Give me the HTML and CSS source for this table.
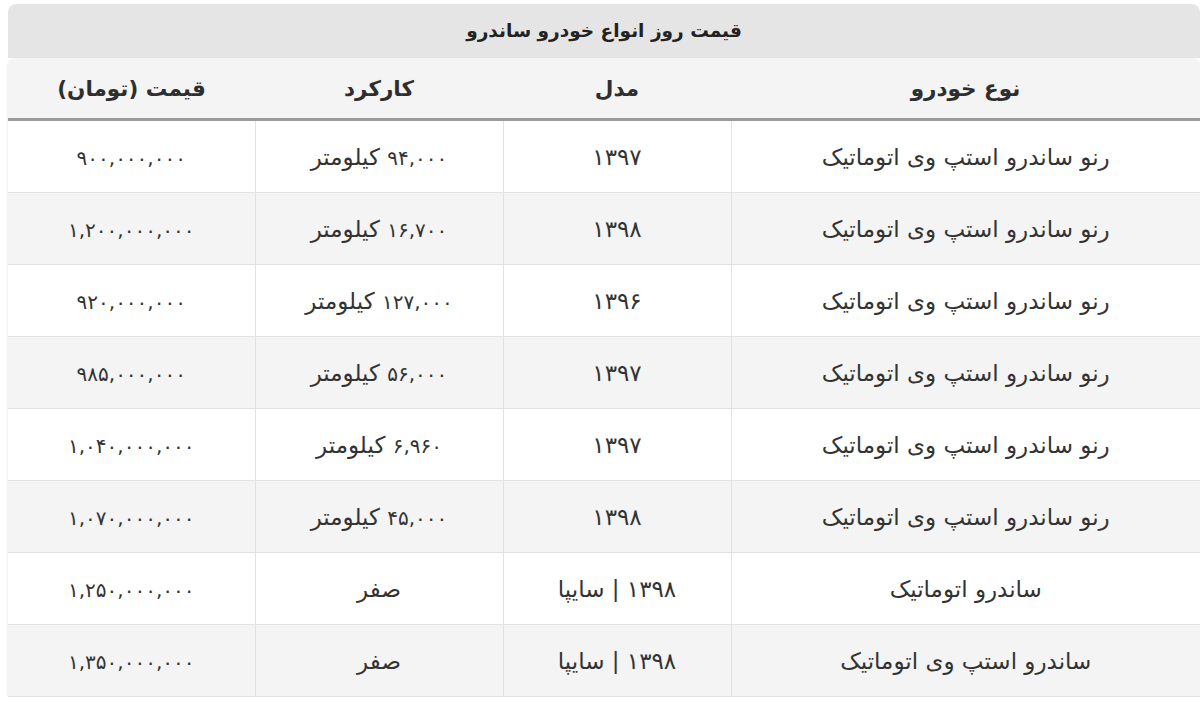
FILE: index.html
```html
<!DOCTYPE html>
<html lang="fa" dir="rtl">
<head>
<meta charset="utf-8">
<title>قیمت روز انواع خودرو ساندرو</title>
<link rel="stylesheet" href="styles.css">
</head>
<body>
<div class="page">
  <div class="title">قیمت روز انواع خودرو ساندرو</div>
  <div class="table-wrap">
    <table class="prices">
      <colgroup>
        <col class="c-type"><col class="c-model"><col class="c-km"><col class="c-price">
      </colgroup>
      <thead>
        <tr><th>نوع خودرو</th><th>مدل</th><th>کارکرد</th><th>قیمت (تومان)</th></tr>
      </thead>
      <tbody>
        <tr><td>رنو ساندرو استپ وی اتوماتیک</td><td><span class="num year">۱۳۹۷</span></td><td><span class="num">۹۴,۰۰۰</span> کیلومتر</td><td><span class="num">۹۰۰,۰۰۰,۰۰۰</span></td></tr>
        <tr><td>رنو ساندرو استپ وی اتوماتیک</td><td><span class="num year">۱۳۹۸</span></td><td><span class="num">۱۶,۷۰۰</span> کیلومتر</td><td><span class="num">۱,۲۰۰,۰۰۰,۰۰۰</span></td></tr>
        <tr><td>رنو ساندرو استپ وی اتوماتیک</td><td><span class="num year">۱۳۹۶</span></td><td><span class="num">۱۲۷,۰۰۰</span> کیلومتر</td><td><span class="num">۹۲۰,۰۰۰,۰۰۰</span></td></tr>
        <tr><td>رنو ساندرو استپ وی اتوماتیک</td><td><span class="num year">۱۳۹۷</span></td><td><span class="num">۵۶,۰۰۰</span> کیلومتر</td><td><span class="num">۹۸۵,۰۰۰,۰۰۰</span></td></tr>
        <tr><td>رنو ساندرو استپ وی اتوماتیک</td><td><span class="num year">۱۳۹۷</span></td><td><span class="num">۶,۹۶۰</span> کیلومتر</td><td><span class="num">۱,۰۴۰,۰۰۰,۰۰۰</span></td></tr>
        <tr><td>رنو ساندرو استپ وی اتوماتیک</td><td><span class="num year">۱۳۹۸</span></td><td><span class="num">۴۵,۰۰۰</span> کیلومتر</td><td><span class="num">۱,۰۷۰,۰۰۰,۰۰۰</span></td></tr>
        <tr><td>ساندرو اتوماتیک</td><td><span class="num year">۱۳۹۸</span> | سایپا</td><td>صفر</td><td><span class="num">۱,۲۵۰,۰۰۰,۰۰۰</span></td></tr>
        <tr><td>ساندرو استپ وی اتوماتیک</td><td><span class="num year">۱۳۹۸</span> | سایپا</td><td>صفر</td><td><span class="num">۱,۳۵۰,۰۰۰,۰۰۰</span></td></tr>
      </tbody>
    </table>
  </div>
</div>
</body>
</html>
```

FILE: styles.css
```css
html, body {
  margin: 0;
  padding: 0;
  background: #ffffff;
}

body {
  font-family: "DejaVu Sans", "Noto Sans", sans-serif;
  color: #333333;
}

.page {
  width: 1192px;
  padding: 4px 0 0 0;
  margin-left: 8px;
}

.title {
  height: 54px;
  line-height: 54px;
  background: #e5e5e5;
  border-radius: 8px 8px 0 0;
  text-align: center;
  font-weight: bold;
  font-size: 18.5px;
  color: #222222;
}

.table-wrap {
  margin-top: 1px;
  border-radius: 8px 8px 0 0;
  overflow: hidden;
  box-shadow: 0 0 3px rgba(0, 0, 0, 0.12);
}

.prices {
  width: 100%;
  border-collapse: collapse;
  table-layout: fixed;
}

.c-type { width: 469px; }
.c-model { width: 228px; }
.c-km { width: 248px; }
.c-price { width: 247px; }

.prices th {
  height: 59px;
  background: #f4f4f4;
  font-size: 21.5px;
  font-weight: bold;
  color: #2e2e2e;
  text-align: center;
  border-bottom: 3px solid #9a9a9a;
  padding: 0;
}

.prices td {
  height: 71px;
  font-size: 23px;
  color: #333333;
  text-align: center;
  padding: 0;
  border-bottom: 1px solid #e2e2e2;
  border-left: 1px solid #e2e2e2;
}

.prices td:last-child {
  border-left: none;
}

.prices tbody tr:nth-child(even) td {
  background: #f4f4f4;
}

.num {
  font-size: 20px;
}

.num.year {
  font-size: 23px;
}
```
